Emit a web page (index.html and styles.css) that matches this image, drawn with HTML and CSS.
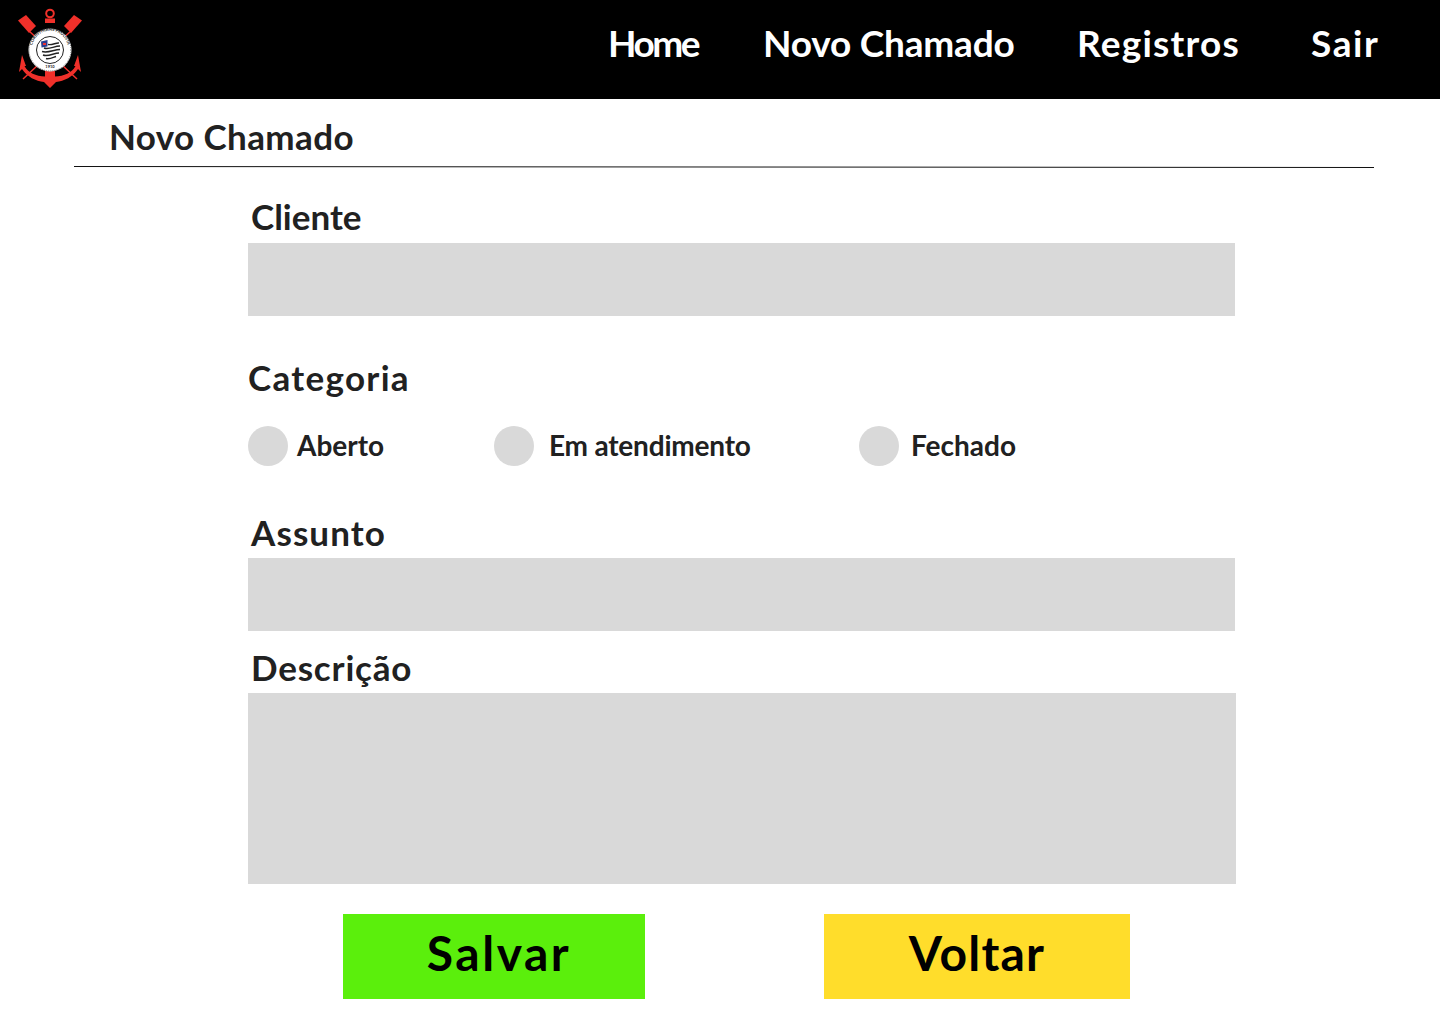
FILE: index.html
```html
<!DOCTYPE html>
<html lang="pt-BR">
<head>
<meta charset="utf-8">
<title>Novo Chamado</title>
<link rel="stylesheet" href="styles.css">
</head>
<body>
<header class="topbar">
  <svg class="logo" viewBox="18 8 64 80" width="64" height="80" aria-label="Corinthians">
    <defs><path id="ringtop" d="M33.500 56A18 18 0 1 1 66.500 56"/></defs>
    <g fill="#f0302a">
      <path d="M18 20.500 26 15 36 26 29 33Z"/>
      <path d="M82 20.500 74 15 64 26 71 33Z"/>
      <path d="M45 18.500h10v4.500H45z"/>
      <path d="M22 55 26 66 24.500 66C28 73 36 76 45 76.500L45 71H55L55 76.500C64 76 72 73 75.500 66L74 66 78 55 81 72 78 69C73 77 64 81 56 82L50 88 44 82C36 81 27 77 22 69L19 72Z"/>
    </g>
    <circle cx="50" cy="13.500" r="3.800" fill="none" stroke="#f0302a" stroke-width="2"/>
    <path d="M29 31 40 41M71 31 60 41M23 79 38 65M77 79 62 65" stroke="#f0302a" stroke-width="1.500"/>
    <circle cx="50" cy="50" r="21.500" fill="#fff"/>
    <circle cx="50" cy="50" r="21" fill="none" stroke="#666" stroke-width="1" stroke-dasharray="1 1"/>
    <text class="crest-text"><textPath href="#ringtop" startOffset="50%" text-anchor="middle">CORINTHIANS PAULISTA</textPath></text>
    <text class="crest-year" x="50" y="68" text-anchor="middle">1910</text>
    <circle cx="50" cy="50" r="13.500" fill="#fff" stroke="#222" stroke-width="1"/>
    <g stroke="#222" stroke-width="1.400" fill="none">
      <path d="M44 48C49 50 54 46 60 46"/>
      <path d="M42 51.500C48 53.500 54 49.500 60 49.500"/>
      <path d="M43 55C48 57 54 53 59 53"/>
      <path d="M46 58.500C49 59.500 53 57.500 56 56.500"/>
      <path d="M48 44.500C52 45.500 56 42.500 59 43"/>
    </g>
    <path d="M41 41.500 47.500 40V46.500L41.500 47.500Z" fill="#2a3f8f"/>
    <path d="M43 43h3v2h-3z" fill="#e33"/>
  </svg>
  <nav class="menu">
    <a class="menu-home">Home</a>
    <a class="menu-new">Novo Chamado</a>
    <a class="menu-log">Registros</a>
    <a class="menu-exit">Sair</a>
  </nav>
</header>

<main class="page">
  <h1 class="title">Novo Chamado</h1>
  <svg class="rule" viewBox="0 0 1300 2" width="1300" height="2" preserveAspectRatio="none"><line x1="0" y1="0.500" x2="1300" y2="1.500" stroke="#111" stroke-width="1"/></svg>

  <form class="form">
    <label class="label label-client">Cliente</label>
    <div class="field"></div>

    <div class="label-cat">Categoria</div>
    <div class="options">
      <div class="option opt-open"><span class="dot"></span><span class="opt-text">Aberto</span></div>
      <div class="option opt-prog"><span class="dot"></span><span class="opt-text">Em atendimento</span></div>
      <div class="option opt-closed"><span class="dot"></span><span class="opt-text">Fechado</span></div>
    </div>

    <label class="label label-subject">Assunto</label>
    <div class="field"></div>

    <label class="label label-desc">Descrição</label>
    <div class="area"></div>

    <div class="actions">
      <button type="button" class="btn btn-save">Salvar</button>
      <button type="button" class="btn btn-back">Voltar</button>
    </div>
  </form>
</main>
</body>
</html>
```
FILE: styles.css
```css
* { box-sizing: border-box; }
html, body { margin: 0; padding: 0; background: #fff; }
body {
  font-family: "Lato", "Open Sans", sans-serif;
  font-weight: 700;
  color: #212121;
  width: 1440px;
  height: 1024px;
  overflow: hidden;
}
.topbar {
  height: 99px;
  background: #000;
  display: flex;
  align-items: flex-start;
  padding: 8px 0 0 18px;
}
.logo { display: block; flex: none; }
.crest-text { font-size: 4.200px; font-weight: 700; fill: #222; }
.crest-year { font-size: 4px; font-weight: 700; fill: #222; }
.menu {
  display: flex;
  margin-left: 526px;
  padding-top: 13px;
  color: #fff;
  font-size: 37px;
  line-height: 44px;
}
.menu a { display: block; white-space: nowrap; }
.menu-home { width: 155px; letter-spacing: -2.500px; }
.menu-new { width: 314px; letter-spacing: -0.200px; }
.menu-log { width: 234px; letter-spacing: 1.200px; }
.menu-exit { letter-spacing: 1.600px; }
.page { padding-left: 74px; }
.title {
  margin: 0;
  padding: 16px 0 0 35px;
  font-size: 35px;
  line-height: 42px;
  font-weight: 700;
  color: #212121;
  letter-spacing: 0.400px;
}
.rule { display: block; margin-top: 9px; }
.form { margin: 0 0 0 174px; width: 988px; }
.label {
  display: block;
  padding-left: 3px;
  font-size: 35px;
  line-height: 42px;
}
.label-client { margin-top: 27px; height: 48px; }
.label-subject { margin-top: 45px; height: 47px; letter-spacing: 1.100px; }
.label-desc { margin-top: 15px; height: 47px; letter-spacing: 0.800px; }
.label-cat { margin-top: 39px; font-size: 35px; line-height: 44px; height: 44px; letter-spacing: 1.300px; }
.field { height: 73px; width: 987px; background: #d9d9d9; }
.area { height: 191px; width: 988px; background: #d9d9d9; }
.options { display: flex; margin-top: 27px; height: 40px; }
.option { display: flex; align-items: center; }
.dot { width: 40px; height: 40px; border-radius: 50%; background: #d9d9d9; flex: none; }
.opt-text { font-size: 28px; line-height: 40px; white-space: nowrap; margin-bottom: 2px; }
.opt-open { width: 246px; }
.opt-open .opt-text { margin-left: 9px; }
.opt-prog { width: 365px; }
.opt-prog .opt-text { margin-left: 15px; letter-spacing: -0.200px; }
.opt-closed .opt-text { margin-left: 12px; }
.actions { display: flex; margin: 30px 0 0 95px; }
.btn {
  border: 0;
  height: 85px;
  padding: 0 0 8px;
  font: inherit;
  font-size: 48px;
  color: #000;
}
.btn-save { width: 302px; background: #5bef0c; padding-left: 10px; letter-spacing: 2.500px; }
.btn-back { width: 306px; margin-left: 179px; background: #ffdd2b; letter-spacing: 1.200px; }
```
